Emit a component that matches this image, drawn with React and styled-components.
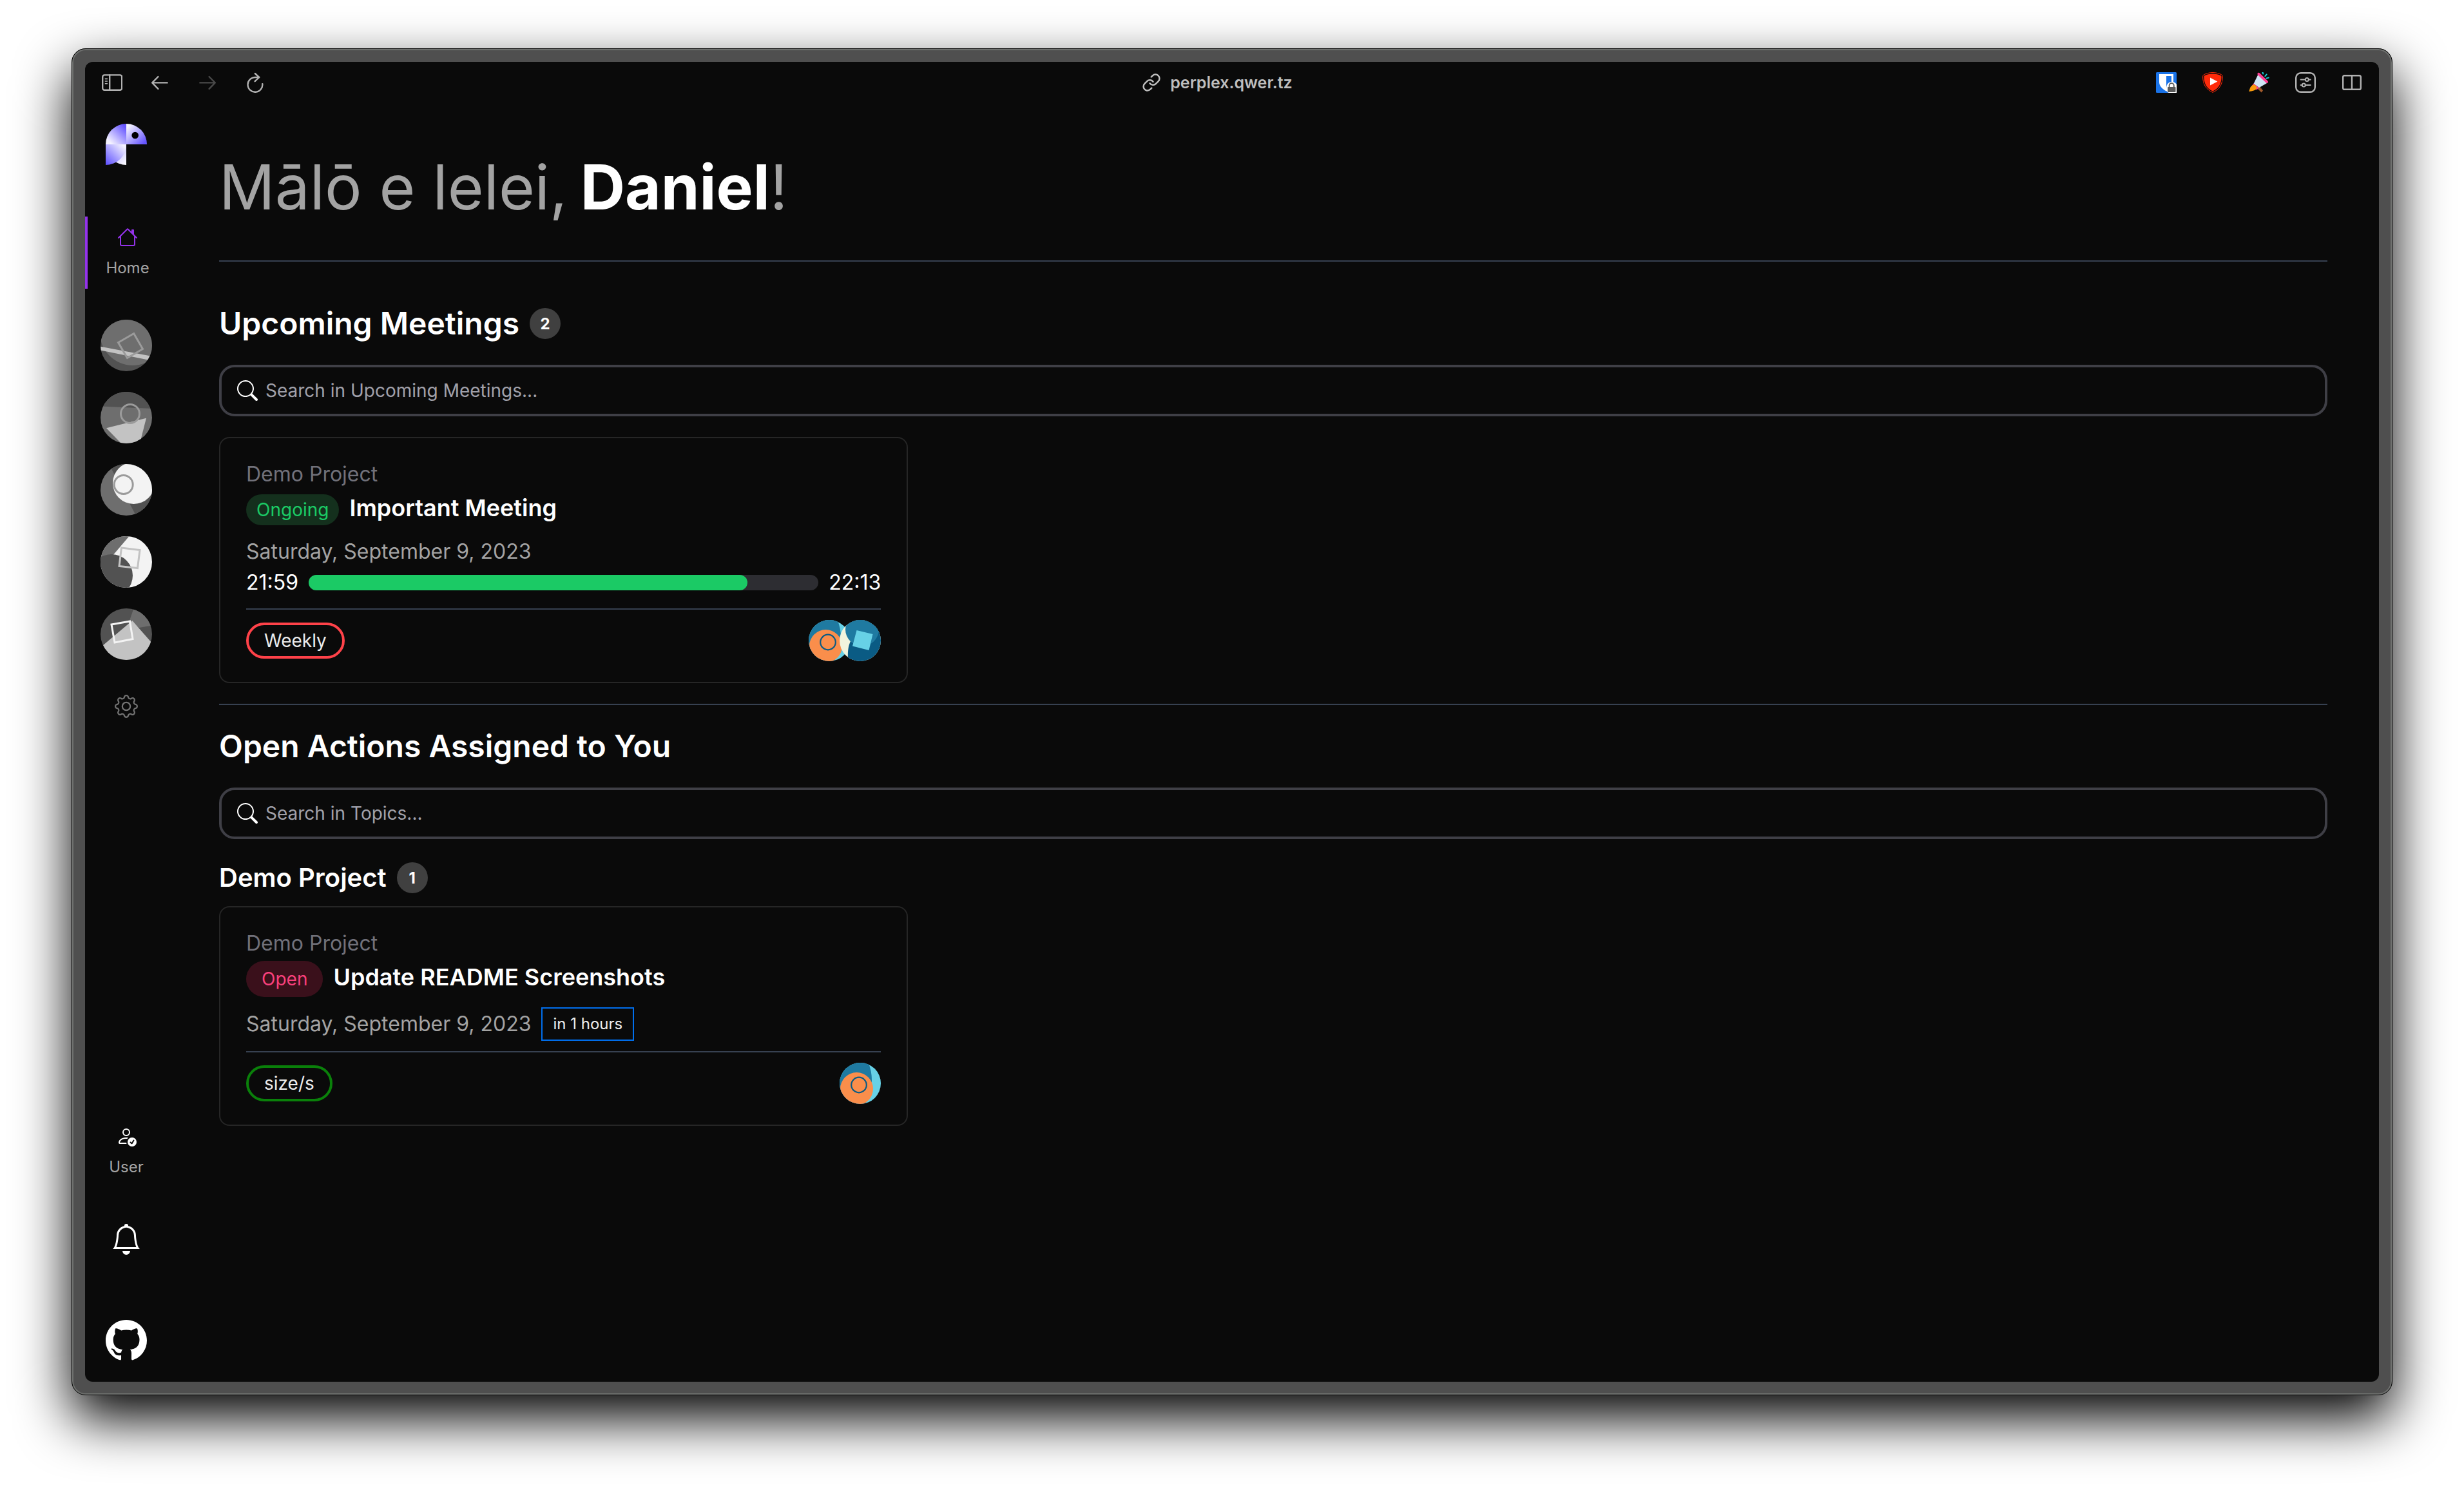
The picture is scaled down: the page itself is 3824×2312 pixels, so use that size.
import React from "react";
import styled, { createGlobalStyle } from "styled-components";
import {
  BsBell,
  BsGear,
  BsGithub,
  BsHouse,
  BsPersonCheck,
  BsSearch,
} from "react-icons/bs";
import { Link } from "lucide-react";

const GlobalStyle = createGlobalStyle`
  *, *::before, *::after { box-sizing: border-box; }
  body {
    margin: 0;
    background: #ffffff;
    font-family: Inter, "Liberation Sans", sans-serif;
    color: #ffffff;
  }
  h1, h2, h3, h4, p, ul { margin: 0; padding: 0; }
  ul { list-style: none; }
  a { color: inherit; text-decoration: none; }
  button { font: inherit; color: inherit; background: none; border: 0; padding: 0; cursor: pointer; }
  svg { display: block; flex: none; }
`;

const Desktop = styled.div`
  display: flex;
  min-height: 100vh;
  padding: 75px 111px 147px;
`;

const Frame = styled.div`
  flex: 1;
  display: flex;
  padding: 18px;
  border: 3px solid #6f716f;
  border-radius: 22px;
  background: #4f4f4f;
  box-shadow: 0 36px 84px #000000;
  outline: 1px solid #000000;
  outline-offset: -1px;
`;

const Browser = styled.div`
  flex: 1;
  display: flex;
  flex-direction: column;
  border-radius: 12px;
  background: #0a0a0a;
  overflow: hidden;
`;

const Toolbar = styled.header`
  display: grid;
  grid-template-columns: 1fr auto 1fr;
  align-items: center;
  height: 64px;
  padding: 0 26px;
  color: #b2b2b2;
`;

const ToolGroup = styled.div`
  display: flex;
  gap: ${(p) => p.$gap}px;
  justify-content: ${(p) => (p.$end ? "flex-end" : "flex-start")};
`;

const ToolButton = styled.button`
  width: 32px;
  height: 32px;
  &:disabled { color: #494949; }
`;

const Address = styled.div`
  display: flex;
  align-items: center;
  gap: 14px;
  padding-right: 46px;
  font-size: 25px;
  font-weight: 600;
  line-height: 32px;
  color: #bebebe;
`;

const Body = styled.div`
  flex: 1;
  display: flex;
`;

const Sidebar = styled.nav`
  display: flex;
  flex-direction: column;
  width: 128px;
  padding: 32px 0;
`;

const LogoLink = styled.a`
  align-self: center;
  margin-bottom: 80px;
`;

const NavItem = styled.a`
  display: flex;
  flex-direction: column;
  align-items: center;
  gap: 16px;
  padding: 16px 0;
  border-left: ${(p) => (p.$active ? "4px solid #9333ea" : "0")};
  font-size: 24px;
  line-height: 32px;
  color: #a3a3a3;
  svg { color: ${(p) => (p.$active ? "#9333ea" : "#ffffff")}; }
`;

const ProjectList = styled.ul`
  display: flex;
  flex-direction: column;
  align-items: center;
  gap: 32px;
  margin-top: 48px;
`;

const ProjectLink = styled.a`
  display: flex;
  align-items: center;
  justify-content: center;
  width: 80px;
  height: 80px;
  border-radius: 50%;
  overflow: hidden;
  color: #737373;
`;

const SidebarFooter = styled.div`
  display: flex;
  flex-direction: column;
  gap: 56px;
  margin-top: auto;
`;

const BellButton = styled.button`
  align-self: center;
`;

const GithubLink = styled.a`
  align-self: center;
  margin-top: 45px;
`;

const Main = styled.main`
  flex: 1;
  padding: 80px;
`;

const Greeting = styled.h1`
  display: flex;
  gap: 20px;
  font-size: 96px;
  font-weight: 400;
  line-height: 100px;
  color: #a3a3a3;
  strong { font-weight: 700; color: #ffffff; }
`;

const Divider = styled.hr`
  height: 2px;
  margin: ${(p) => p.$top}px 0 ${(p) => p.$bottom}px;
  border: 0;
  background: #374151;
`;

const Heading = styled.div`
  display: flex;
  align-items: center;
  gap: 16px;
  h2 { font-size: 48px; font-weight: 600; line-height: 64px; }
  h3 { font-size: 40px; font-weight: 600; line-height: 56px; }
`;

const Count = styled.span`
  display: flex;
  align-items: center;
  justify-content: center;
  width: 48px;
  height: 48px;
  border-radius: 50%;
  background: #404040;
  font-size: 24px;
  font-weight: 700;
`;

const SearchBox = styled.label`
  display: flex;
  align-items: center;
  gap: 12px;
  height: 80px;
  margin: 32px 0;
  padding: 0 24px;
  border: 4px solid #3f3f46;
  border-radius: 24px;
`;

const SearchInput = styled.input`
  flex: 1;
  min-width: 0;
  padding: 0;
  border: 0;
  outline: 0;
  background: transparent;
  font: 400 28px/40px Inter, "Liberation Sans", sans-serif;
  color: #ffffff;
  &::placeholder { color: #a1a1aa; opacity: 1; }
`;

const CardGrid = styled.div`
  display: grid;
  grid-template-columns: repeat(3, 1fr);
  gap: 32px;
  margin-top: ${(p) => p.$top || 0}px;
`;

const Card = styled.article`
  padding: 32px 40px;
  border: 2px solid #262626;
  border-radius: 16px;
`;

const ProjectName = styled.p`
  font-size: 32px;
  line-height: 48px;
  color: #71717a;
`;

const TitleRow = styled.div`
  display: flex;
  align-items: baseline;
  gap: 16px;
  margin-bottom: 16px;
  h4 { font-size: 36px; font-weight: 600; line-height: 56px; }
`;

const Status = styled.span`
  padding: 0 ${(p) => (p.$open ? 24 : 16)}px;
  border-radius: 28px;
  font-size: 28px;
  line-height: ${(p) => (p.$open ? 56 : 48)}px;
  background: ${(p) => (p.$open ? "#3a101b" : "#14301d")};
  color: ${(p) => (p.$open ? "#f9407c" : "#1bca65")};
`;

const DateRow = styled.div`
  display: flex;
  align-items: center;
  gap: 16px;
  font-size: 32px;
  line-height: 48px;
  color: #a3a3a3;
`;

const Due = styled.span`
  padding: 8px 16px;
  border: 2px solid #006fee;
  font-size: 24px;
  line-height: 32px;
  color: #ececec;
`;

const TimeRow = styled.div`
  display: flex;
  align-items: center;
  gap: 16px;
  font-size: 32px;
  line-height: 48px;
`;

const Track = styled.div`
  flex: 1;
  height: 24px;
  border-radius: 12px;
  background: #2d2d32;
`;

const Fill = styled.div`
  height: 24px;
  border-radius: 12px;
  background: #1bca65;
`;

const CardFooter = styled.footer`
  display: flex;
  align-items: center;
  justify-content: space-between;
`;

const Tag = styled.span`
  padding: 0 24px;
  border: 4px solid ${(p) => p.$color};
  border-radius: 28px;
  font-size: 28px;
  line-height: 48px;
  color: #ececec;
`;

const Avatars = styled.div`
  display: flex;
  svg { border-radius: 50%; }
  svg + svg { margin-left: -16px; }
`;

const stroke = {
  fill: "none",
  stroke: "currentColor",
  strokeWidth: 2.4,
  strokeLinecap: "round",
  strokeLinejoin: "round",
};

const SidebarIcon = () => (
  <svg width="32" height="32" viewBox="0 0 32 32" {...stroke}>
    <rect x="1.2" y="4.4" width="30" height="23.4" rx="3" />
    <path d="M12.2 4.4v23.4" />
    <path d="M5.4 10.4h3M5.4 14h3M5.4 17.8h3" strokeWidth="1.6" />
  </svg>
);

const BackIcon = () => (
  <svg width="32" height="32" viewBox="0 0 32 32" {...stroke}>
    <path d="M27.6 16.4H4.4M13.4 7L4.2 16.4l9.2 9.4" />
  </svg>
);

const ForwardIcon = () => (
  <svg width="32" height="32" viewBox="0 0 32 32" {...stroke}>
    <path d="M4.4 16.4h23.2M18.6 7l9.2 9.4-9.2 9.4" />
  </svg>
);

const ReloadIcon = () => (
  <svg width="32" height="32" viewBox="0 0 32 32" {...stroke}>
    <path d="M27.3 18.2A11.4 11.4 0 1 1 16 8h6.2" />
    <path d="M15.8 2l6.4 6-6.6 6.2" />
  </svg>
);

const VaultIcon = () => (
  <svg width="32" height="32" viewBox="0 0 32 32">
    <rect width="32" height="32" rx="1.5" fill="#1a73e8" />
    <path d="M5 3h22v12c0 7-5 11-11 14.6C10 26 5 22 5 15z" fill="#fff" />
    <path d="M16 6h8v9c0 4.500-3.500 8-8 11z" fill="#1a73e8" />
    <path d="M32 32H20a5 5 0 0 1-4-6c0-7 3-11 8.500-11 4 0 6 2 7.500 4z" fill="#fff" />
    <rect x="18" y="23" width="12.500" height="8" rx="1" fill="#5a5a5a" />
    <path d="M20.600 23v-2.200a3.600 3.600 0 0 1 7.200 0V23" fill="none" stroke="#5a5a5a" strokeWidth="1.800" />
  </svg>
);

const ShieldIcon = () => (
  <svg width="32" height="32" viewBox="0 0 32 32">
    <path
      d="M16 .6c5 0 10 1.200 13.600 3.200 1 .6 1.800 1.400 1.800 2.800C31.400 18 27 26.600 16 31.400 5 26.600.6 18 .6 6.600c0-1.400.8-2.200 1.800-2.800C6 1.800 11 .6 16 .6z"
      fill="none"
      stroke="#ff2a0a"
      strokeWidth="1"
    />
    <path
      d="M16 2.400c4.600 0 9 1 12.400 2.800.8.400 1.200 1 1.200 2C29.400 17.500 25.500 25.200 16 29.600 6.500 25.200 2.600 17.500 2.400 7.200c0-1 .4-1.600 1.200-2C7 3.400 11.400 2.400 16 2.400z"
      fill="#ff2a0a"
    />
    <path d="M12 8.400v12l11.400-6z" fill="#fff" />
  </svg>
);

const HornIcon = () => (
  <svg width="32" height="32" viewBox="0 0 32 32">
    <path d="M12.500 24.500l4-3 5.500 7-2.400 3z" fill="#a05a2c" />
    <path d="M16.500 23l1.500-1 .8 4.500-1.800-1z" fill="#7c3f1a" />
    <path d="M14.500 3.500L29 16.500l-13 7.500-8.500-6z" fill="#cfe6f7" />
    <path d="M7.500 17.500l8 6.500-3 3.500-7.500-6.500z" fill="#ff3d92" />
    <path d="M7 19.600c2.500-.6 5.200 2 5.600 4.800-1.600 4-7 5-12.600 5.600 2-2 .6-7.400 7-10.400z" fill="#f99b0c" />
    <path d="M14 1.200c1-.8 2.200-.6 3 .2l12.400 12c.8 1 .8 2.200 0 3-.8.8-2 .6-2.800-.2L14 4.200c-.8-1-.8-2.200 0-3z" fill="#ff3d92" />
    <path d="M21.600.4l.6 2.200M27.600 3.600l-2.200 2.600M30.800 8.600l-3.200.8" stroke="#16d3dc" strokeWidth="2" strokeLinecap="round" />
  </svg>
);

const SettingsIcon = () => (
  <svg width="32" height="32" viewBox="0 0 32 32" {...stroke}>
    <rect x="1.200" y="1.200" width="29.600" height="29.600" rx="7.500" />
    <g strokeWidth="2">
      <path d="M8.600 11.600h7M21 11.600h2.800M8.600 20h2M15.800 20h8" />
      <circle cx="18.300" cy="11.600" r="2.500" />
      <circle cx="13.300" cy="20" r="2.500" />
    </g>
  </svg>
);

const SplitIcon = () => (
  <svg width="32" height="32" viewBox="0 0 32 32" {...stroke}>
    <rect x="2.200" y="5.200" width="27.600" height="21.600" rx="2.400" />
    <path d="M16 5.200v21.600" />
  </svg>
);

const Logo = () => (
  <svg width="64" height="64" viewBox="0 0 64 64">
    <defs>
      <linearGradient id="head" x1="1" y1="0" x2="0" y2="1">
        <stop offset="0.100" stopColor="#6655ff" />
        <stop offset="0.850" stopColor="#f4f2ff" />
      </linearGradient>
      <linearGradient id="face" x1="0" y1="0" x2="1" y2="1">
        <stop offset="0.100" stopColor="#f6f5ff" />
        <stop offset="0.900" stopColor="#6655ff" />
      </linearGradient>
      <linearGradient id="body" x1="0" y1="1" x2="1" y2="0">
        <stop offset="0" stopColor="#5b4dff" />
        <stop offset="0.900" stopColor="#f4f2ff" />
      </linearGradient>
      <linearGradient id="tail" x1="0" y1="0" x2="1" y2="1">
        <stop offset="0.300" stopColor="#b9b3ff" />
        <stop offset="1" stopColor="#ffffff" />
      </linearGradient>
    </defs>
    <path d="M0 32A32 32 0 0 1 32 0v32z" fill="url(#head)" />
    <path d="M32 0a32 32 0 0 1 32 32H32z" fill="url(#face)" />
    <path d="M32 32v32A32 32 0 0 1 0 32z" fill="url(#tail)" />
    <path d="M0 32h32A32 32 0 0 1 0 64z" fill="url(#body)" />
    <circle cx="45.700" cy="18" r="5.300" fill="#000" />
  </svg>
);

const projects = [
  {
    name: "Project 1",
    art: (
      <>
        <rect width="80" height="80" fill="#525252" />
        <circle cx="50" cy="20" r="51" fill="#6e6e6e" />
        <path d="M0 41.700L78 56.500 74 62.500 0 47.500z" fill="#c3c3c3" />
        <path d="M51.700 21.500L65.500 45.500 41.500 59.500 27.500 35.500z" fill="none" stroke="#9b9b9b" strokeWidth="3" />
      </>
    ),
  },
  {
    name: "Project 2",
    art: (
      <>
        <rect width="80" height="80" fill="#6e6e6e" />
        <path d="M0 0h80v26L0 22.500z" fill="#525252" />
        <path d="M9 56.300L71 40.700 61 80H32z" fill="#c3c3c3" />
        <circle cx="46" cy="34" r="14.500" fill="none" stroke="#9b9b9b" strokeWidth="3" />
      </>
    ),
  },
  {
    name: "Project 3",
    art: (
      <>
        <rect width="80" height="80" fill="#6e6e6e" />
        <path d="M13 0L55 80h25V0z" fill="#525252" />
        <circle cx="51.500" cy="29.500" r="32.500" fill="#f3f3f3" />
        <circle cx="35.700" cy="32" r="14.500" fill="none" stroke="#9b9b9b" strokeWidth="3" />
      </>
    ),
  },
  {
    name: "Project 4",
    art: (
      <>
        <rect width="80" height="80" fill="#f3f3f3" />
        <path d="M0 0h44.500L20 28.700 0 52z" fill="#6e6e6e" />
        <circle cx="17" cy="61" r="33" fill="#525252" />
        <path d="M32.500 18L61 21.500 57.500 49.500 29 46.500z" fill="none" stroke="#c3c3c3" strokeWidth="3" />
      </>
    ),
  },
  {
    name: "Project 5",
    art: (
      <>
        <rect width="80" height="80" fill="#525252" />
        <path d="M51.500 0L45 19l15 11 20-3.500V0z" fill="#6e6e6e" />
        <path d="M49.300 19L0 60.500V80h80V54z" fill="#c3c3c3" />
        <path d="M17 25L45.500 20 50 47.500 22 53z" fill="none" stroke="#f3f3f3" strokeWidth="3" />
      </>
    ),
  },
];

const OrangeAvatar = () => (
  <svg width="64" height="64" viewBox="0 0 64 64" role="img" aria-label="Daniel">
    <rect width="64" height="64" fill="#67d1e6" />
    <circle cx="-20" cy="27" r="70" fill="#1f7aa1" />
    <circle cx="26.500" cy="40.500" r="25.500" fill="#fa8e4b" />
    <circle cx="30" cy="34.500" r="11.800" fill="none" stroke="#0a5b84" strokeWidth="2.200" />
  </svg>
);

const BlueAvatar = () => (
  <svg width="64" height="64" viewBox="0 0 64 64" role="img" aria-label="Guest">
    <rect width="64" height="64" fill="#f2f4dd" />
    <path d="M17 33C13 41 12.500 50 13 64h51V0H17z" fill="#0a5b84" />
    <circle cx="35" cy="14.500" r="26" fill="#1f7aa1" />
    <path d="M26.500 16L51.500 22 45.500 47 20 40.500z" fill="#67d1e6" />
  </svg>
);

function Search({ label }) {
  return (
    <SearchBox>
      <BsSearch size={32} />
      <SearchInput type="text" placeholder={label} aria-label={label} />
    </SearchBox>
  );
}

function Progress({ value }) {
  return (
    <Track role="progressbar" aria-label="Meeting progress" aria-valuenow={value} aria-valuemin={0} aria-valuemax={100}>
      <Fill style={{ width: `${value}%` }} />
    </Track>
  );
}

export default function App() {
  return (
    <Desktop>
      <GlobalStyle />
      <Frame>
        <Browser>
          <Toolbar>
            <ToolGroup $gap={42}>
              <ToolButton aria-label="Toggle sidebar"><SidebarIcon /></ToolButton>
              <ToolButton aria-label="Back"><BackIcon /></ToolButton>
              <ToolButton aria-label="Forward" disabled><ForwardIcon /></ToolButton>
              <ToolButton aria-label="Reload"><ReloadIcon /></ToolButton>
            </ToolGroup>
            <Address>
              <Link size={30} strokeWidth={2} />
              <span>perplex.qwer.tz</span>
            </Address>
            <ToolGroup $gap={40} $end>
              <ToolButton aria-label="Password vault"><VaultIcon /></ToolButton>
              <ToolButton aria-label="Video shield"><ShieldIcon /></ToolButton>
              <ToolButton aria-label="Announcements"><HornIcon /></ToolButton>
              <ToolButton aria-label="Site settings"><SettingsIcon /></ToolButton>
              <ToolButton aria-label="Split view"><SplitIcon /></ToolButton>
            </ToolGroup>
          </Toolbar>

          <Body>
            <Sidebar>
              <LogoLink href="#" aria-label="Perplex"><Logo /></LogoLink>
              <NavItem href="#home" $active>
                <BsHouse size={32} />
                Home
              </NavItem>
              <ProjectList>
                {projects.map((p) => (
                  <li key={p.name}>
                    <ProjectLink href="#project" aria-label={p.name}>
                      <svg width="80" height="80" viewBox="0 0 80 80">{p.art}</svg>
                    </ProjectLink>
                  </li>
                ))}
                <li>
                  <ProjectLink href="#settings" aria-label="Settings">
                    <BsGear size={36} />
                  </ProjectLink>
                </li>
              </ProjectList>
              <SidebarFooter>
                <NavItem href="#user">
                  <BsPersonCheck size={32} />
                  User
                </NavItem>
                <BellButton aria-label="Notifications"><BsBell size={48} /></BellButton>
                <GithubLink href="#github" aria-label="GitHub"><BsGithub size={64} /></GithubLink>
              </SidebarFooter>
            </Sidebar>

            <Main>
              <Greeting>
                <span>Mālō e lelei,</span>
                <span>
                  <strong>Daniel</strong>!
                </span>
              </Greeting>
              <Divider $top={64} $bottom={64} />

              <section>
                <Heading>
                  <h2>Upcoming Meetings</h2>
                  <Count>2</Count>
                </Heading>
                <Search label="Search in Upcoming Meetings..." />
                <CardGrid>
                  <Card>
                    <ProjectName>Demo Project</ProjectName>
                    <TitleRow>
                      <Status>Ongoing</Status>
                      <h4>Important Meeting</h4>
                    </TitleRow>
                    <DateRow>Saturday, September 9, 2023</DateRow>
                    <TimeRow>
                      <span>21:59</span>
                      <Progress value={86} />
                      <span>22:13</span>
                    </TimeRow>
                    <Divider $top={16} $bottom={16} />
                    <CardFooter>
                      <Tag $color="#ff4249">Weekly</Tag>
                      <Avatars>
                        <OrangeAvatar />
                        <BlueAvatar />
                      </Avatars>
                    </CardFooter>
                  </Card>
                </CardGrid>
              </section>

              <Divider $top={32} $bottom={32} />

              <section>
                <Heading>
                  <h2>Open Actions Assigned to You</h2>
                </Heading>
                <Search label="Search in Topics..." />
                <Heading>
                  <h3>Demo Project</h3>
                  <Count>1</Count>
                </Heading>
                <CardGrid $top={16}>
                  <Card>
                    <ProjectName>Demo Project</ProjectName>
                    <TitleRow>
                      <Status $open>Open</Status>
                      <h4>Update README Screenshots</h4>
                    </TitleRow>
                    <DateRow>
                      Saturday, September 9, 2023
                      <Due>in 1 hours</Due>
                    </DateRow>
                    <Divider $top={16} $bottom={16} />
                    <CardFooter>
                      <Tag $color="#0a800a">size/s</Tag>
                      <Avatars>
                        <OrangeAvatar />
                      </Avatars>
                    </CardFooter>
                  </Card>
                </CardGrid>
              </section>
            </Main>
          </Body>
        </Browser>
      </Frame>
    </Desktop>
  );
}
